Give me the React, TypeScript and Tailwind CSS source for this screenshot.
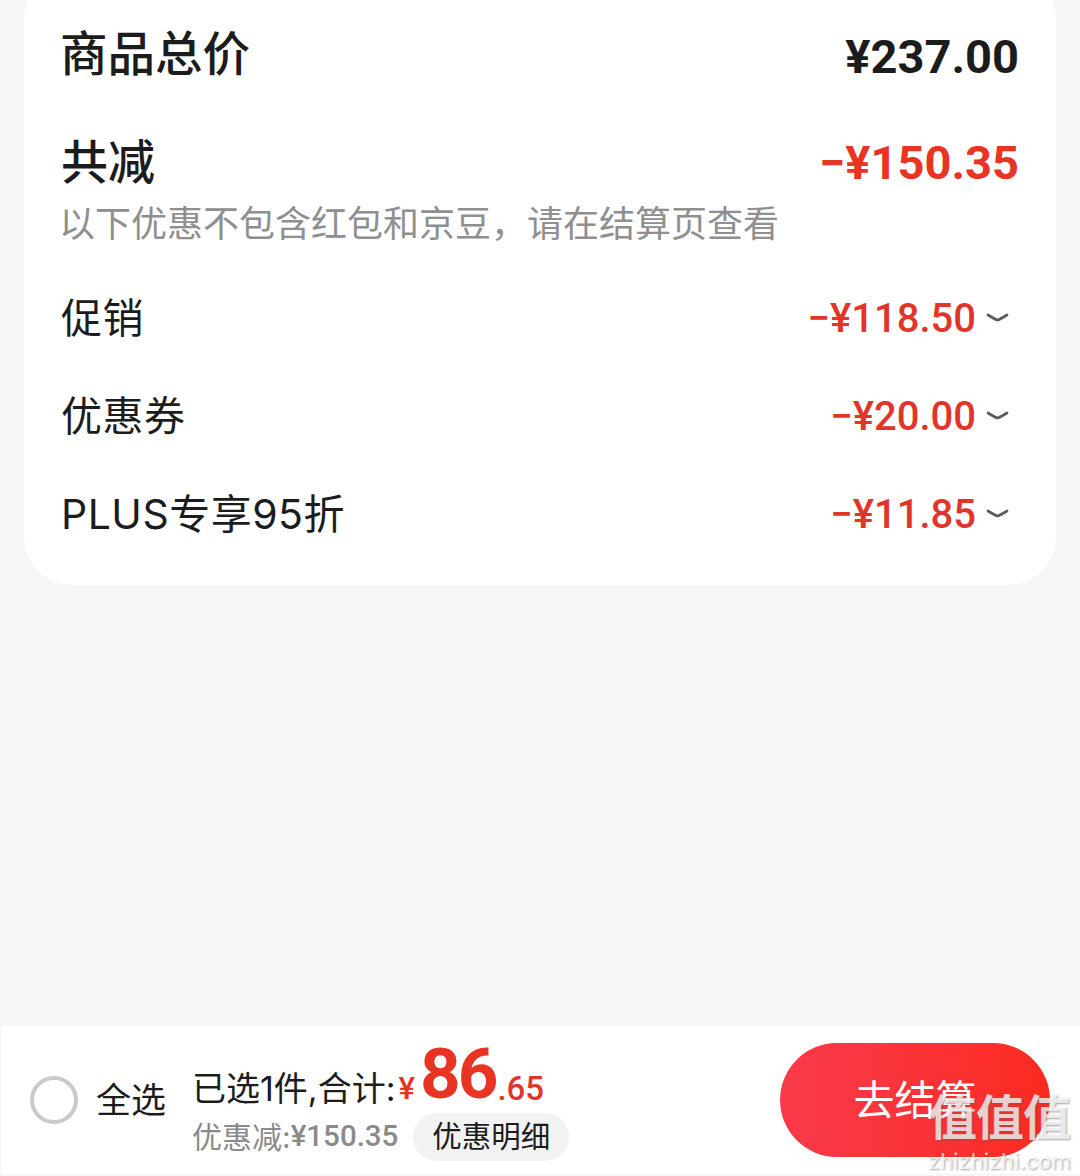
const stack = "font-['Inter','Noto_Sans_CJK_SC',sans-serif]";
const amountFont = "font-['Roboto','Noto_Sans_CJK_SC',sans-serif]";

const rows = [
  { label: "促销", amount: "−¥118.50" },
  { label: "优惠券", amount: "−¥20.00" },
  { label: "PLUS专享95折", amount: "−¥11.85" },
];

function Chevron() {
  return (
    <svg width="24" height="12" viewBox="0 0 24 12" fill="none" className="ml-[10px]">
      <path d="M2 3 C6.5 5.5 9 7.5 11.5 8 C14 7.5 16.5 5.5 21 3" stroke="#5c5c5c" strokeWidth="2.8" strokeLinecap="round" />
    </svg>
  );
}

export default function App() {
  return (
    <div className={`${stack} relative flex h-[1176px] w-[1080px] flex-col overflow-hidden bg-[#f6f6f6]`}>
      <div className="mx-6 -mt-[30px] flex h-[615px] flex-col rounded-[48px] bg-white pt-[51px] pr-[37px] pl-[37px]">
        <div className="flex h-[70px] items-center justify-between">
          <span className="mb-[4px] -ml-[1px] text-[47.5px] leading-none font-medium text-[#1c1c1c]">商品总价</span>
          <span className={`${amountFont} text-[47px] leading-none font-bold text-[#1c1c1c]`}>¥237.00</span>
        </div>
        <div className="mt-[37px] flex h-[70px] items-center justify-between">
          <span className="mb-[4px] text-[47px] leading-none font-medium text-[#1c1c1c]">共减</span>
          <span className={`${amountFont} mb-[2px] text-[47px] leading-none font-bold text-[#e93323]`}>−¥150.35</span>
        </div>
        <div className="mt-[4px] -ml-[2px] text-[36px] leading-[44px] text-[#8f8f8f]">
          以下优惠不包含红包和京豆，请在结算页查看
        </div>
        <div className="mt-[42px] flex flex-col gap-[38px]">
          {rows.map((row) => (
            <div key={row.label} className="flex h-[60px] items-center justify-between">
              <span className="text-[41px] leading-none tracking-[0.5px] text-[#1c1c1c]">{row.label}</span>
              <div className="mr-[9px] flex items-center">
                <span className={`${amountFont} mt-[2px] text-[40px] leading-none font-medium text-[#e2352a]`}>{row.amount}</span>
                <Chevron />
              </div>
            </div>
          ))}
        </div>
      </div>

      <div className="mt-auto mb-[2px] ml-px flex h-[148px] items-center bg-white pr-[30px] pl-[29px]">
        <div className="h-[48px] w-[48px] rounded-full border-[4px] border-[#cacaca]" />
        <span className="ml-[18px] text-[35px] leading-none text-[#1c1c1c]">全选</span>
        <div className="mt-[4px] ml-[26px] flex flex-col">
          <div className="flex h-[69px] items-end">
            <span className="mb-[4px] text-[34px] leading-[40px] text-[#1c1c1c]">已选1件,合计:</span>
            <span className={`${amountFont} mb-[4px] ml-[3px] text-[31px] leading-[40px] font-medium text-[#e93323]`}>¥</span>
            <span className={`${amountFont} ml-[5px] text-[71px] leading-[78px] font-bold tracking-[-3px] text-[#e93323]`}>86</span>
            <span className={`${amountFont} mb-[4px] ml-[2px] text-[33px] leading-[40px] font-medium text-[#e0362a]`}>.65</span>
          </div>
          <div className="flex h-[48px] items-center">
            <span className="text-[30px] leading-none text-[#8a8a8a]">优惠减:</span>
            <span className={`${amountFont} text-[29.5px] leading-none font-medium text-[#8a8a8a]`}>¥150.35</span>
            <span className="ml-[15px] flex h-[48px] w-[156px] items-center justify-center rounded-full bg-[#f2f2f2] text-[29.5px] leading-none text-[#1c1c1c]">
              优惠明细
            </span>
          </div>
        </div>
        <button className="ml-auto flex h-[114px] w-[270px] items-center justify-center rounded-full bg-gradient-to-r from-[#f93a4a] to-[#fb2a1e] text-[41px] leading-none text-white">
          去结算
        </button>
      </div>

      {/* watermark */}
      <div className="absolute top-[1089px] left-[928px] flex flex-col items-center text-white/75 [text-shadow:1px_1px_2px_rgba(90,90,90,0.55)]">
        <span className="text-[48px] leading-[58px] font-bold tracking-[-1px]">值值值</span>
        <span className="text-[22px] leading-[28px] font-normal">zhizhizhi.com</span>
      </div>
    </div>
  );
}
